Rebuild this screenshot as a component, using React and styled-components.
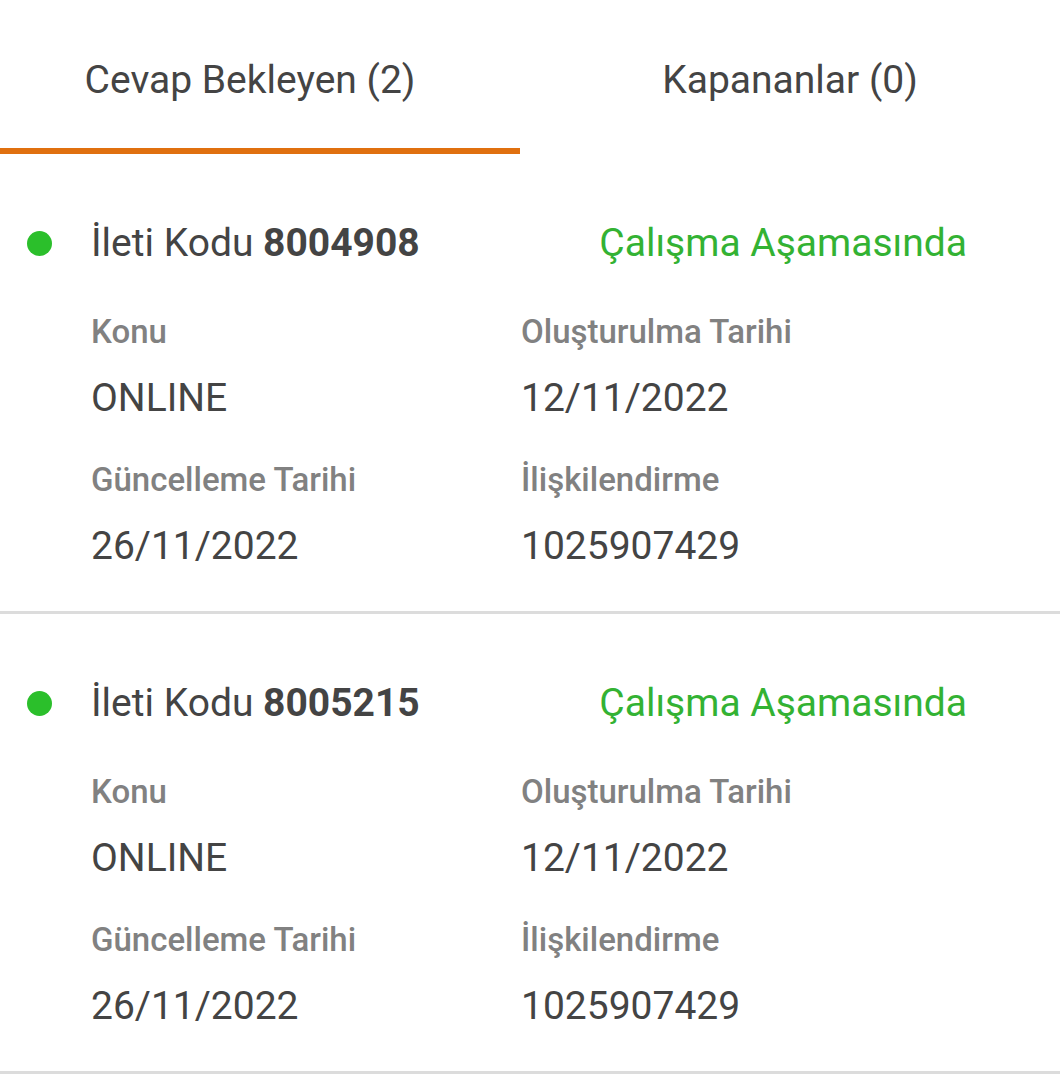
import React from 'react'
import styled, { createGlobalStyle } from 'styled-components'

const GlobalStyle = createGlobalStyle`
    body {
        margin: 0;
        background: #fff;
        font-family: Roboto, "Noto Sans", sans-serif;
    }
`;

const Page = styled.div`
    width: 1060px;
    background: #fff;
`;

const TabBar = styled.div`
    display: grid;
    grid-template-columns: 520px 1fr;
`;

const Tab = styled.div`
    height: 154px;
    display: flex;
    align-items: center;
    justify-content: center;
    padding: 12px ${props => props.active ? '20px' : '0'} 0 0;
    box-sizing: border-box;
    font-size: 39px;
    color: #444;
    border-bottom: 6px solid ${props => props.active ? '#e0700f' : 'transparent'};
`;

const Card = styled.div`
    padding: 65px 93px 41px 27px;
    border-bottom: 3px solid #dcdcdc;
`;

const Header = styled.div`
    display: flex;
    align-items: center;
    justify-content: space-between;
    height: 48px;
`;

const TitleWrap = styled.div`
    display: flex;
    align-items: center;
    gap: 39px;
`;

const Dot = styled.span`
    width: 25px;
    height: 25px;
    border-radius: 50%;
    background: #2bbf2b;
`;

const Title = styled.div`
    font-size: 39px;
    color: #444;
    b {
        font-weight: 700;
    }
`;

const Status = styled.div`
    font-size: 39px;
    color: #33b233;
`;

const Fields = styled.div`
    display: grid;
    grid-template-columns: 430px 1fr;
    row-gap: 38px;
    margin-top: 45px;
    padding-left: 64px;
`;

const Field = styled.div`
    display: flex;
    flex-direction: column;
    gap: 22px;
`;

const Label = styled.div`
    font-size: 33px;
    line-height: 40px;
    font-weight: 500;
    color: #818181;
`;

const Value = styled.div`
    font-size: 39px;
    line-height: 48px;
    color: #444;
`;

const tickets = [
    { code: '8004908', subject: 'ONLINE', created: '12/11/2022', updated: '26/11/2022', relation: '1025907429' },
    { code: '8005215', subject: 'ONLINE', created: '12/11/2022', updated: '26/11/2022', relation: '1025907429' },
];

const TicketCard = ({ ticket }) => (
    <Card>
        <Header>
            <TitleWrap>
                <Dot />
                <Title>İleti Kodu <b>{ticket.code}</b></Title>
            </TitleWrap>
            <Status>Çalışma Aşamasında</Status>
        </Header>
        <Fields>
            <Field>
                <Label>Konu</Label>
                <Value>{ticket.subject}</Value>
            </Field>
            <Field>
                <Label>Oluşturulma Tarihi</Label>
                <Value>{ticket.created}</Value>
            </Field>
            <Field>
                <Label>Güncelleme Tarihi</Label>
                <Value>{ticket.updated}</Value>
            </Field>
            <Field>
                <Label>İlişkilendirme</Label>
                <Value>{ticket.relation}</Value>
            </Field>
        </Fields>
    </Card>
);

export default function App() {
    return (
        <Page>
            <GlobalStyle />
            <TabBar>
                <Tab active>Cevap Bekleyen (2)</Tab>
                <Tab>Kapananlar (0)</Tab>
            </TabBar>
            {tickets.map(t => <TicketCard key={t.code} ticket={t} />)}
        </Page>
    )
}
